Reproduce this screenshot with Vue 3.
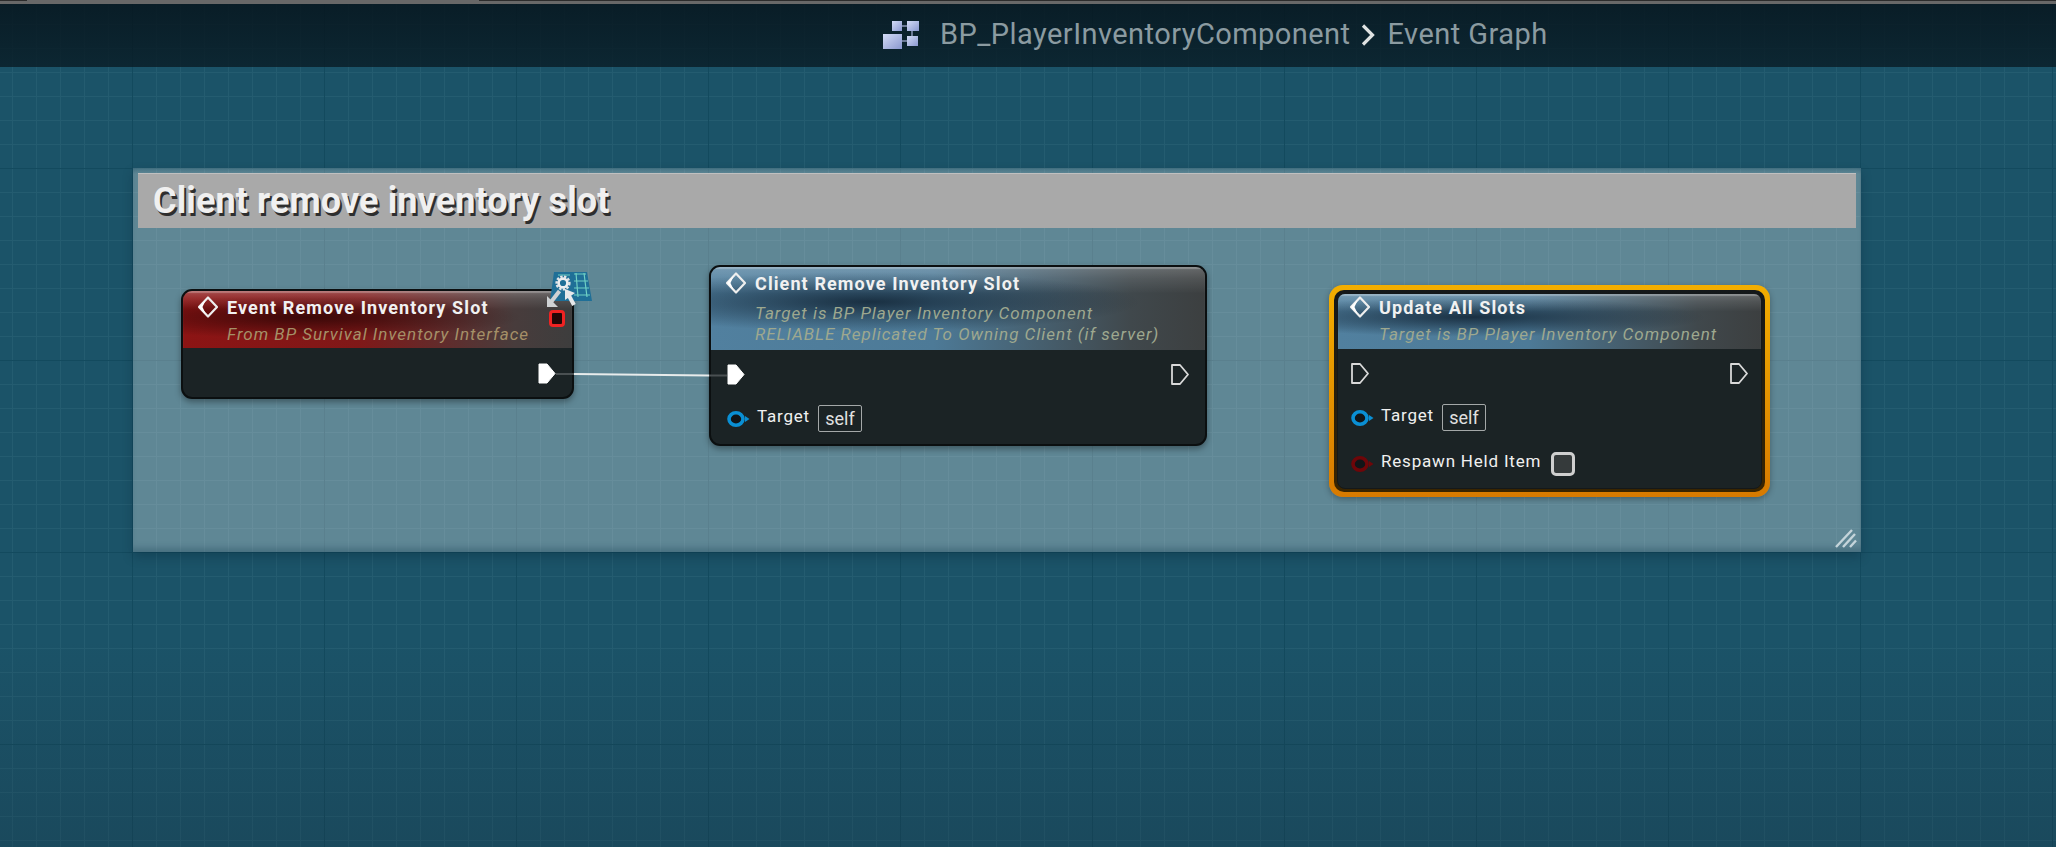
<script setup>
const target = { label: 'Target', value: 'self' }
</script>

<template>
  <div class="editor">
    <div class="topbar"><span class="seg seg-a"></span><span class="seg seg-b"></span></div>
    <header class="crumbs">
      <svg class="bp-icon" width="36" height="28" viewBox="0 0 36 28">
        <defs>
          <linearGradient id="sq" x1="0" y1="0" x2="1" y2="1">
            <stop offset="0" stop-color="#d3dcf6" />
            <stop offset="1" stop-color="#8a98d0" />
          </linearGradient>
        </defs>
        <path d="M15 5h10M29 10v6M19 20h6" stroke="#8b97b8" stroke-width="1.5" />
        <rect x="9" y="0" width="10" height="10" fill="url(#sq)" />
        <rect x="24" y="0" width="12" height="10" fill="url(#sq)" />
        <rect x="0" y="13" width="19" height="15" fill="url(#sq)" />
        <rect x="24" y="15" width="11" height="10" fill="url(#sq)" />
      </svg>
      <span class="crumb crumb-bp">BP_PlayerInventoryComponent</span>
      <svg class="chev" width="14" height="22" viewBox="0 0 14 22">
        <path d="M2 1.5 L11.5 11 L2 20.5" fill="none" stroke="#dfe2e2" stroke-width="3.2" />
      </svg>
      <span class="crumb">Event Graph</span>
    </header>

    <main class="graph">
      <section class="comment">
        <h1 class="comment-title">Client remove inventory slot</h1>
        <svg class="grip" width="22" height="19" viewBox="0 0 22 19">
          <path d="M1 18 L17 1 M8 18 L20 5 M15 18 L21 11.5" stroke="#c4d4da" stroke-width="2.4" fill="none" />
        </svg>
      </section>

      <article class="node node-event">
        <div class="head head-red">
          <div class="title-row">
            <svg class="diamond" width="22" height="24" viewBox="0 0 22 24">
              <path d="M11 2.5 L20 12 L11 21.5 L2 12 Z" fill="none" stroke="#eee" stroke-width="2.2" stroke-linejoin="round" />
              <path d="M9 4.5 L2 12 L9 19.5 L5.5 12 Z" fill="#fff" />
            </svg>
            <span class="title">Event Remove Inventory Slot</span>
          </div>
          <p class="sub sub-red first">From BP Survival Inventory Interface</p>
        </div>
        <div class="body body-event">
          <div class="exec-row end">
            <svg class="exec" width="18" height="21" viewBox="0 0 18 21"><path d="M1 1 H9 L17 10.5 L9 20 H1 Z" fill="#fff" stroke="#fff" stroke-linejoin="round" /></svg>
          </div>
        </div>
      </article>

      <div class="delegate-pin"></div>
      <svg class="iface" width="48" height="42" viewBox="0 0 48 42">
        <path d="M8 1 H41 L46 30 H4 Z" fill="#1f6f97" />
        <path d="M28 3 H40 M28 10 H42 M28 17 H43 M28 24 H44 M30 2 L32 26 M38 2 L41 26 M12 4 H24" stroke="#6fcfc4" stroke-width="1.2" fill="none" />
        <circle cx="17" cy="12" r="6.4" fill="none" stroke="#e2e4e6" stroke-width="2.4" stroke-dasharray="2.4 1.4" />
        <circle cx="17" cy="12" r="4.4" fill="none" stroke="#eceef0" stroke-width="2.6" />
        <path d="M13.5 20 L5 31" stroke="#cfd2d4" stroke-width="4" fill="none" />
        <path d="M1 25 L1 36 L12 36 Z" fill="#cfd2d4" />
        <path d="M28 34 L22 23" stroke="#e6e8ea" stroke-width="4" fill="none" />
        <path d="M19 18 L29 22 L19 29 Z" fill="#e6e8ea" />
      </svg>

      <article class="node node-client">
        <div class="head head-blue">
          <div class="title-row">
            <svg class="diamond" width="22" height="24" viewBox="0 0 22 24">
              <path d="M11 2.5 L20 12 L11 21.5 L2 12 Z" fill="none" stroke="#eee" stroke-width="2.2" stroke-linejoin="round" />
              <path d="M9 4.5 L2 12 L9 19.5 L5.5 12 Z" fill="#fff" />
            </svg>
            <span class="title">Client Remove Inventory Slot</span>
          </div>
          <p class="sub sub-blue two">Target is BP Player Inventory Component</p>
          <p class="sub sub-blue two-b">RELIABLE Replicated To Owning Client (if server)</p>
        </div>
        <div class="body body-client">
          <div class="exec-row between">
            <svg class="exec" width="18" height="21" viewBox="0 0 18 21"><path d="M1 1 H9 L17 10.5 L9 20 H1 Z" fill="#fff" stroke="#fff" stroke-linejoin="round" /></svg>
            <svg class="exec" width="18" height="21" viewBox="0 0 18 21"><path d="M1 1 H9 L17 10.5 L9 20 H1 Z" fill="none" stroke="#d9d9d9" stroke-width="1.8" stroke-linejoin="round" /></svg>
          </div>
          <div class="pin-row row-target">
            <svg class="data" width="23" height="18" viewBox="0 0 23 18">
              <ellipse cx="9" cy="9" rx="7" ry="6.2" fill="#111518" stroke="#0a8fd4" stroke-width="3.6" />
              <path d="M18 6 L22.5 9 L18 12 Z" fill="#0a8fd4" />
            </svg>
            <span class="label">{{ target.label }}</span>
            <span class="self">{{ target.value }}</span>
          </div>
        </div>
      </article>

      <div class="selected">
        <div class="selected-gap">
          <article class="node node-update">
            <div class="head head-blue">
              <div class="title-row">
                <svg class="diamond" width="22" height="24" viewBox="0 0 22 24">
                  <path d="M11 2.5 L20 12 L11 21.5 L2 12 Z" fill="none" stroke="#eee" stroke-width="2.2" stroke-linejoin="round" />
                  <path d="M9 4.5 L2 12 L9 19.5 L5.5 12 Z" fill="#fff" />
                </svg>
                <span class="title">Update All Slots</span>
              </div>
              <p class="sub sub-blue first">Target is BP Player Inventory Component</p>
            </div>
            <div class="body body-update">
              <div class="exec-row between">
                <svg class="exec" width="18" height="21" viewBox="0 0 18 21"><path d="M1 1 H9 L17 10.5 L9 20 H1 Z" fill="none" stroke="#d9d9d9" stroke-width="1.8" stroke-linejoin="round" /></svg>
                <svg class="exec" width="18" height="21" viewBox="0 0 18 21"><path d="M1 1 H9 L17 10.5 L9 20 H1 Z" fill="none" stroke="#d9d9d9" stroke-width="1.8" stroke-linejoin="round" /></svg>
              </div>
              <div class="pin-row row-target">
                <svg class="data" width="23" height="18" viewBox="0 0 23 18">
                  <ellipse cx="9" cy="9" rx="7" ry="6.2" fill="#111518" stroke="#0a8fd4" stroke-width="3.6" />
                  <path d="M18 6 L22.5 9 L18 12 Z" fill="#0a8fd4" />
                </svg>
                <span class="label">{{ target.label }}</span>
                <span class="self">{{ target.value }}</span>
              </div>
              <div class="pin-row row-respawn">
                <svg class="data" width="23" height="18" viewBox="0 0 23 18">
                  <ellipse cx="9" cy="9" rx="7" ry="6.2" fill="#111518" stroke="#6e0609" stroke-width="3.6" />
                  <path d="M18 6 L22.5 9 L18 12 Z" fill="#6e0609" />
                </svg>
                <span class="label label-up">Respawn Held Item</span>
                <span class="check"></span>
              </div>
            </div>
          </article>
        </div>
      </div>

      <svg class="wires" width="2056" height="780" viewBox="0 0 2056 780">
        <path d="M556 307 H574" stroke="#4a5052" stroke-width="2" fill="none" />
        <path d="M574 307 L709 308.5" stroke="#e8ecec" stroke-width="2" fill="none" />
        <path d="M709 308.5 H727" stroke="#4a5052" stroke-width="2" fill="none" />
      </svg>
    </main>
  </div>
</template>

<style>
html, body { margin: 0; background: #1b5368; }
</style>

<style scoped>
.editor {
  width: 2056px;
  height: 847px;
  overflow: hidden;
  display: flex;
  flex-direction: column;
  font-family: Roboto, "Liberation Sans", sans-serif;
  background-color: #1b5368;
  background-image:
    linear-gradient(180deg, rgba(0,0,0,0) 0, rgba(0,0,0,0) 640px, rgba(24,50,66,.3) 847px),
    linear-gradient(90deg, #134a5e 1px, transparent 1px),
    linear-gradient(180deg, #134a5e 1px, transparent 1px),
    linear-gradient(90deg, #245c70 1px, transparent 1px),
    linear-gradient(180deg, #245c70 1px, transparent 1px);
  background-size: 100% 100%, 192px 192px, 192px 192px, 24px 24px, 24px 24px;
  background-position: 0 0, 132px 0, 0 168px, 12px 0, 0 0;
}
.topbar {
  position: relative;
  height: 4px;
  flex: none;
  background: #686868;
}
.seg { position: absolute; top: 0; height: 1px; background: #2c2c2c; }
.seg-a { left: 0; width: 27px; }
.seg-b { left: 479px; right: 0; }
.crumbs {
  height: 63px;
  flex: none;
  display: flex;
  align-items: center;
  padding-left: 883px;
  background: linear-gradient(180deg, rgba(6,20,28,.86), rgba(8,26,35,.78));
}
.bp-icon { flex: none; margin-right: 21px; margin-top: -1px; }
.crumb {
  font-size: 29px;
  letter-spacing: .45px;
  color: #8b9ba1;
  line-height: 34px;
  margin-top: -3px;
  white-space: nowrap;
}
.chev { flex: none; margin: -1px 13px 0 10px; }

.graph { position: relative; flex: 1; }
.wires { position: absolute; left: 0; top: 0; pointer-events: none; }

.comment {
  position: absolute;
  left: 133px;
  top: 101px;
  width: 1728px;
  height: 384px;
  box-sizing: border-box;
  padding: 5px;
  background:
    linear-gradient(180deg, rgba(27,83,104,.4) 0, rgba(27,83,104,0) 6px),
    rgba(255,255,255,.3);
  box-shadow: 0 5px 10px rgba(0,30,45,.28), inset 0 -7px 6px -3px rgba(30,70,90,.35);
}
.comment-title {
  margin: 0;
  height: 55px;
  box-sizing: border-box;
  padding: 0 0 0 15px;
  background: #a9a9a9;
  box-shadow: inset 0 1px 0 #c0c0c0;
  font-size: 36px;
  line-height: 57px;
  font-weight: 700;
  letter-spacing: .1px;
  color: #f0f0f0;
  text-shadow: 2px 3px 0 #2e2e2e;
  white-space: nowrap;
}
.grip { position: absolute; right: 4px; bottom: 4px; }

.node {
  position: absolute;
  box-sizing: border-box;
  border: 2px solid #0b0f10;
  border-radius: 11px;
  background: #1b2325;
  box-shadow: 0 3px 6px rgba(0,0,0,.35);
  overflow: hidden;
}
.node-event { left: 181px; top: 222px; width: 393px; height: 110px; }
.node-client { left: 709px; top: 198px; width: 498px; height: 181px; }
.node-update { position: static; width: 100%; height: 100%; box-shadow: none; border-width: 1px; border-color: #14181a; border-radius: 8px; }

.selected {
  position: absolute;
  left: 1329px;
  top: 218px;
  width: 441px;
  height: 212px;
  box-sizing: border-box;
  padding: 5px;
  border-radius: 14px;
  background: linear-gradient(180deg, #f3ae00, #d77a00);
  box-shadow: 0 2px 6px rgba(0,0,0,.3);
}
.selected-gap {
  height: 100%;
  box-sizing: border-box;
  padding: 3px;
  border-radius: 10px;
  background: linear-gradient(180deg, #14181a, #3a2500);
}

.head { box-sizing: border-box; box-shadow: inset 0 2px 1px rgba(255,255,255,.25); }
.head-red {
  height: 57px;
  padding: 6px 0 0 14px;
  background:
    linear-gradient(180deg, rgba(255,255,255,.24) 0, rgba(255,255,255,.1) 14%, rgba(255,255,255,0) 32%),
    radial-gradient(ellipse 55% 38% at 32% 46%, rgba(20,0,0,.66), rgba(20,0,0,0)),
    linear-gradient(90deg, #8c1414 0, #801818 45%, #483c3c 85%, #3d3d3d 100%);
}
.head-blue {
  padding: 6px 0 0 14px;
  background:
    linear-gradient(180deg, rgba(255,255,255,.22) 0, rgba(255,255,255,.1) 14%, rgba(255,255,255,0) 32%),
    radial-gradient(ellipse 55% 36% at 32% 42%, rgba(5,18,32,.72), rgba(5,18,32,0)),
    linear-gradient(90deg, #51809f 0, #4d7a97 45%, #40484c 85%, #3c3f40 100%);
}
.node-client .head-blue { height: 83px; padding-top: 6px; }
.node-update .head-blue { height: 55px; padding: 3px 0 0 11px; }

.title-row { display: flex; align-items: center; height: 20px; }
.diamond { flex: none; margin-right: 8px; }
.title {
  font-size: 18px;
  font-weight: 700;
  color: #f1f1f1;
  letter-spacing: 1.1px;
  white-space: nowrap;
}
.sub {
  margin: 0;
  padding-left: 30px;
  font-size: 17px;
  font-style: italic;
  line-height: 20px;
  letter-spacing: 1px;
  white-space: nowrap;
}
.sub.first { margin-top: 7px; }
.sub.two { margin-top: 10px; line-height: 21px; }
.sub.two-b { line-height: 21px; }
.sub-red { color: #a59068; }
.sub-blue { color: #9ea88f; }

.body { box-sizing: border-box; padding: 15px 16px 0; }
.body-client { padding-top: 14px; }
.body-update { padding: 14px 13px 0 13px; }
.exec-row { display: flex; height: 21px; }
.exec { display: block; flex: none; }
.end { justify-content: flex-end; }
.between { justify-content: space-between; }

.pin-row { display: flex; align-items: center; }
.row-target { margin-top: 20px; height: 27px; }
.row-respawn { margin-top: 21px; height: 24px; }
.data { flex: none; margin-right: 7px; }
.label {
  font-size: 17px;
  color: #f0f0f0;
  letter-spacing: .8px;
  line-height: 20px;
  margin-top: -5px;
  white-space: nowrap;
}
.label-up { margin-top: -7px; }
.self {
  box-sizing: border-box;
  width: 44px;
  height: 27px;
  margin-left: 8px;
  border: 1.5px solid #a4a8a8;
  border-radius: 2px;
  font-size: 18px;
  line-height: 25px;
  text-align: center;
  color: #e0e0e0;
}
.check {
  box-sizing: border-box;
  width: 24px;
  height: 24px;
  margin-left: 10px;
  border: 3px solid #cfcfcf;
  border-radius: 5px;
  background: #353a3b;
}
.delegate-pin {
  position: absolute;
  left: 549px;
  top: 243px;
  width: 16px;
  height: 17px;
  box-sizing: border-box;
  border: 3px solid #f02222;
  border-radius: 4px;
  background: #220707;
}
.iface { position: absolute; left: 546px; top: 204px; }
</style>
